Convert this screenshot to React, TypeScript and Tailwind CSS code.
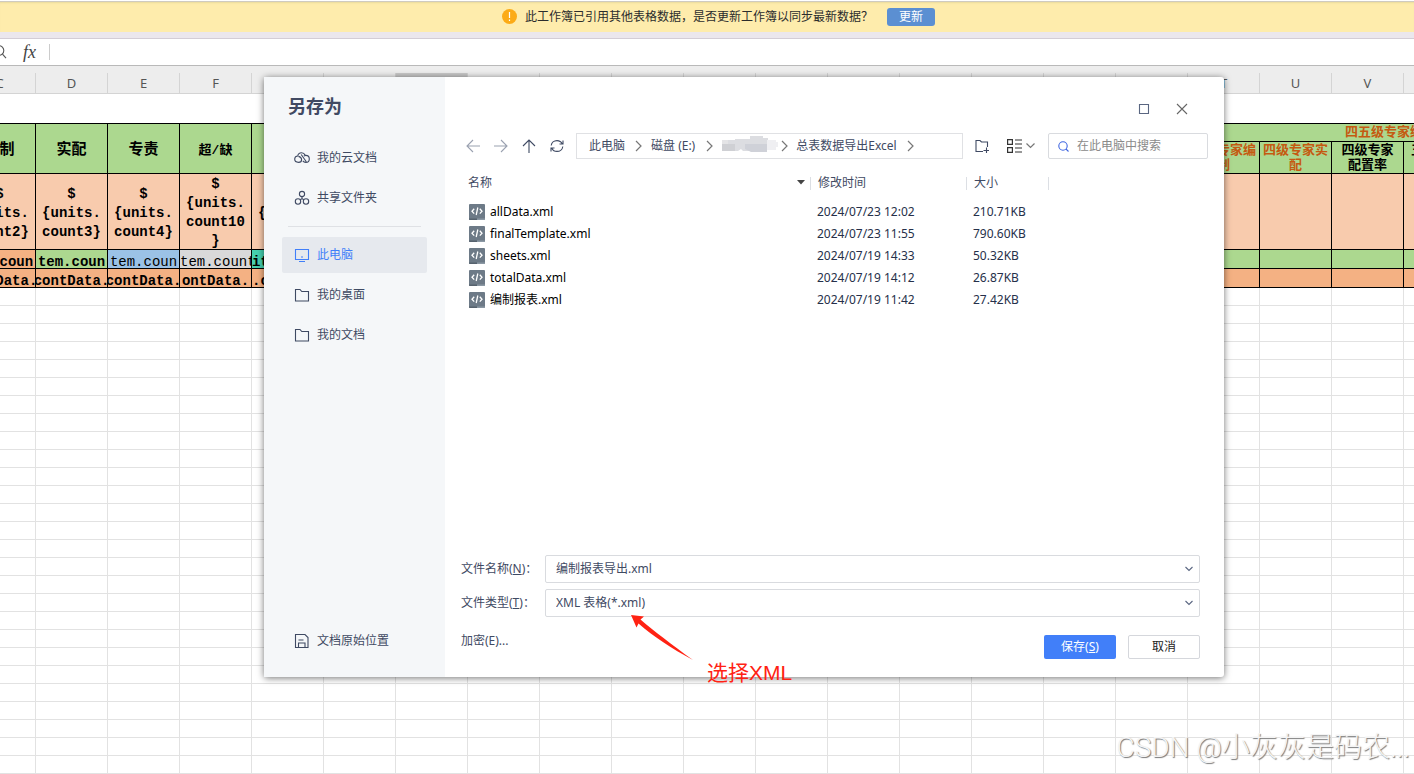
import type { ReactNode } from "react";

const HEADERS = ["C", "D", "E", "F", "", "", "", "", "", "", "", "", "", "", "", "", "", "T", "U", "V", ""];
const BLANK_ROWS = Array.from({ length: 27 }, (_, i) => i);
const SELECTED_COLUMN = 6;

const UNIT_LINES: Record<number, string[]> = {
  0: ["$", "{units.", "count2}"],
  1: ["$", "{units.", "count3}"],
  2: ["$", "{units.", "count4}"],
  3: ["$", "{units.", "count10", "}"],
};

const ITEM_CELLS: Record<number, { text: string; style: string }> = {
  0: { text: "tem.coun", style: "bg-[#f4b183] font-bold justify-center" },
  1: { text: "tem.coun", style: "bg-[#acd88f] font-bold justify-center" },
  2: { text: "tem.coun", style: "bg-[#9bc2e6] justify-center" },
  3: { text: "tem.count", style: "bg-[#d9d9d9] justify-start" },
  4: { text: "it", style: "bg-[#46d0b0] font-bold justify-start" },
};

const TOTAL_CELLS: Record<number, string> = {
  0: "contData.",
  1: "contData.",
  2: "contData.",
  3: "ontData.",
};

const FILES = [
  { name: "allData.xml", date: "2024/07/23 12:02", size: "210.71KB" },
  { name: "finalTemplate.xml", date: "2024/07/23 11:55", size: "790.60KB" },
  { name: "sheets.xml", date: "2024/07/19 14:33", size: "50.32KB" },
  { name: "totalData.xml", date: "2024/07/19 14:12", size: "26.87KB" },
  { name: "编制报表.xml", date: "2024/07/19 11:42", size: "27.42KB" },
];

function Icon({ children, className = "", size = 16 }: { children: ReactNode; className?: string; size?: number }) {
  return (
    <svg
      width={size}
      height={size}
      viewBox={`0 0 ${size} ${size}`}
      fill="none"
      stroke="currentColor"
      strokeWidth="1.1"
      className={`shrink-0 ${className}`}
      aria-hidden="true"
    >
      {children}
    </svg>
  );
}

const Chevron = () => (
  <svg width="7" height="12" viewBox="0 0 7 12" fill="none" stroke="#777" strokeWidth="1.2" className="shrink-0" aria-hidden="true">
    <path d="M1 1l5 5-5 5" />
  </svg>
);

const CloudIcon = () => (
  <Icon>
    <path d="M4.6 12.4C2.4 12.4.7 11 .7 9.1.7 7.4 2 6.1 3.7 6c.4-2 1.900-3.200 3.800-3.200 1.700 0 3 .9 3.600 2.400M4.600 12.400c1.900 0 3-1.100 3-2.700 0-1.800-1.500-2.900-3.100-3.300M7.200 4.500l5.100 7.300M8.800 10.900c.8 1.100 1.700 1.500 3 1.500 2 0 3.500-1.500 3.500-3.500s-1.500-3.500-3.500-3.500c-.8 0-1.400.2-2 .6" />
  </Icon>
);

const ShareIcon = () => (
  <Icon>
    <circle cx="8" cy="4" r="2.600" />
    <circle cx="4" cy="11.500" r="2.700" />
    <circle cx="12" cy="11.500" r="2.700" />
    <path d="M8 6.600v2L6.100 9.800M8 8.600l1.900 1.200" />
  </Icon>
);

const MonitorIcon = () => (
  <Icon>
    <path d="M1.500 2.500h13v10h-13zM5 14.500h6M7 10h2" />
  </Icon>
);

const FolderIcon = () => (
  <Icon>
    <path d="M1.500 2.500h4.500l1.800 2h6.700v9.500h-13z" />
  </Icon>
);

const SaveIcon = () => (
  <Icon>
    <path d="M1.500 1.500h9.500l3 3v10H1.500zM4.500 14.500V10h6.500v4.500M4.500 7h5" />
  </Icon>
);

const XmlIcon = () => (
  <svg width="16" height="16" viewBox="0 0 16 16" fill="none" className="shrink-0" aria-hidden="true">
    <rect width="16" height="16" rx="1" fill="#6d7a87" />
    <path d="M0 14.500h8V16H1a1 1 0 0 1-1-1z" fill="#56626e" />
    <path d="M8 14.500h8V15a1 1 0 0 1-1 1H8z" fill="#8b98a4" />
    <path d="M5.200 4.800L3 7.200l2.200 2.400M10.800 4.800L13 7.200l-2.200 2.400M8.800 3.500L7.200 11" stroke="#fff" strokeWidth="1.300" />
  </svg>
);

function NavItem({ icon, label, active = false }: { icon: ReactNode; label: string; active?: boolean }) {
  return (
    <button
      type="button"
      className={`flex h-9 w-full items-center gap-[7px] rounded-[2px] pl-3 text-left ${
        active ? "bg-[#e6e9ee] text-[#417ff9]" : "text-[#3f4a63]"
      }`}
    >
      {icon}
      <span>{label}</span>
    </button>
  );
}

function Banner() {
  return (
    <div className="flex h-8 shrink-0 items-center justify-center border-t border-t-[#fff] bg-[#feecac] pl-[23px] shadow-[inset_0_1px_0_#cfcbc0,inset_0_3px_2px_-1px_#eadb9e]">
      <svg width="15" height="15" viewBox="0 0 15 15" aria-hidden="true">
        <circle cx="7.5" cy="7.5" r="7.500" fill="#fcab16" />
        <path d="M7.500 3v6M7.500 10.500v1.500" stroke="#fff" strokeWidth="1.200" />
      </svg>
      <span className="ml-2 text-[#2c2c2c]">此工作簿已引用其他表格数据，是否更新工作簿以同步最新数据？</span>
      <button type="button" className="ml-[14px] h-[18px] w-12 rounded-[3px] bg-[#5b8fd2] leading-[18px] text-white">
        更新
      </button>
    </div>
  );
}

function FormulaBar() {
  return (
    <div className="mt-[6px] flex h-7 shrink-0 items-center border-t border-b border-t-[#d3cdd6] border-b-[#b9b9b9] bg-white">
      <Icon className="-ml-2 text-[#555]">
        <circle cx="7" cy="6.500" r="4.800" />
        <path d="M10.500 10.200l3.500 4" />
      </Icon>
      <span className="ml-[15px] w-6 text-[18px] leading-5 text-[#444] italic [font-family:'Liberation_Serif',serif]">
        fx
      </span>
      <span className="ml-[2px] h-4 w-px bg-[#ccc]" />
    </div>
  );
}

function Sheet() {
  const cell = "border-r border-b border-black p-0";
  return (
    <div className="min-h-0 flex-1 overflow-hidden bg-white">
      <div className="h-[7px] bg-[#ededed]" />
      <table className="-ml-9 w-[1512px] table-fixed border-separate border-spacing-0 [font-family:'Liberation_Mono','Noto_Sans_CJK_SC',monospace]">
        <thead>
          <tr>
            {HEADERS.map((h, i) => (
              <th
                key={i}
                className={`h-[21px] w-[72px] border-r border-b border-[#d4d4d4] p-0 text-[13px] leading-5 font-normal text-[#555] [font-family:'Noto_Sans',sans-serif] ${
                  i === SELECTED_COLUMN ? "bg-[#c9c9c9]" : "bg-[#ededed]"
                }`}
              >
                {h}
              </th>
            ))}
          </tr>
        </thead>
        <tbody>
          <tr>
            <td colSpan={21} className="h-[30px] border-b border-black p-0" />
          </tr>
          <tr className="bg-[#acd88f]">
            <td rowSpan={2} className={`${cell} pt-1 text-center text-[15px] font-bold`}>编制</td>
            <td rowSpan={2} className={`${cell} pt-1 text-center text-[15px] font-bold`}>实配</td>
            <td rowSpan={2} className={`${cell} pt-1 text-center text-[15px] font-bold`}>专责</td>
            <td rowSpan={2} className={`${cell} pt-1 text-center text-[13px] font-bold`}>超/缺</td>
            {HEADERS.slice(4, 17).map((_, i) => (
              <td key={i} rowSpan={2} className={cell} />
            ))}
            <td colSpan={4} className={`${cell} h-[18px] pl-[157px] text-[13px] leading-[17px] font-bold whitespace-nowrap text-[#c55a11]`}>
              四五级专家编
            </td>
          </tr>
          <tr className="bg-[#acd88f] text-center text-[13px] leading-[15px] font-bold">
            <td className={`${cell} h-8 text-[#c55a11]`}>四级专家编<br />制</td>
            <td className={`${cell} text-[#c55a11]`}>四级专家实<br />配</td>
            <td className={cell}>四级专家<br />配置率</td>
            <td className={cell}>
              <div className="h-[30px] pl-[7px] text-left">五</div>
            </td>
          </tr>
          <tr className="bg-[#f8cbad]">
            {HEADERS.map((_, i) => (
              <td key={i} className={`${cell} h-[76px]`}>
                <div className="flex h-[75px] flex-col items-center justify-center overflow-hidden pt-[3px] text-[14px] leading-[19px] font-bold">
                  {(UNIT_LINES[i] ?? []).map((line) => (
                    <span key={line}>{line}</span>
                  ))}
                  {i === 4 && <span className="self-start pl-[6px]">{"{"}</span>}
                </div>
              </td>
            ))}
          </tr>
          <tr className="bg-[#acd88f]">
            {HEADERS.map((_, i) => (
              <td key={i} className={`${cell} h-[19px]`}>
                <div className={`flex h-[18px] overflow-hidden text-[14px] leading-6 ${ITEM_CELLS[i]?.style ?? ""}`}>
                  <span>{ITEM_CELLS[i]?.text}</span>
                </div>
              </td>
            ))}
          </tr>
          <tr className="bg-[#f4b183]">
            {HEADERS.map((_, i) => (
              <td key={i} className={`${cell} h-[19px]`}>
                <div className="flex h-[18px] justify-center overflow-hidden text-[14px] leading-6 font-bold">
                  <span>{TOTAL_CELLS[i]}</span>
                  {i === 4 && <span className="flex-1">.c</span>}
                </div>
              </td>
            ))}
          </tr>
          {BLANK_ROWS.map((r) => (
            <tr key={r}>
              {HEADERS.map((_, i) => (
                <td key={i} className="h-[18px] border-r border-b border-[#e2e2e2] p-0" />
              ))}
            </tr>
          ))}
        </tbody>
      </table>
    </div>
  );
}

function Sidebar() {
  return (
    <aside className="flex w-[181px] shrink-0 flex-col bg-[#f5f7f9] px-[18px] pb-[18px]">
      <h1 className="mt-4 pl-[6px] text-[18px] leading-[26px] font-bold text-[#414a63]">另存为</h1>
      <nav className="mt-[21px] flex flex-col gap-1">
        <NavItem icon={<CloudIcon />} label="我的云文档" />
        <NavItem icon={<ShareIcon />} label="共享文件夹" />
        <hr className="mx-[6px] my-[6px] border-[#dfe1e5]" />
        <NavItem icon={<MonitorIcon />} label="此电脑" active />
        <NavItem icon={<FolderIcon />} label="我的桌面" />
        <NavItem icon={<FolderIcon />} label="我的文档" />
      </nav>
      <div className="mt-auto">
        <NavItem icon={<SaveIcon />} label="文档原始位置" />
      </div>
    </aside>
  );
}

function Toolbar() {
  return (
    <div className="flex h-[26px] items-center pl-[5px]">
      <div className="flex gap-[14px] text-[#3f4a63]">
        <button type="button" aria-label="后退" className="text-[#9aa1b0]">
          <Icon size={14}><path d="M14 7H1M7 1L1 7l6 6" /></Icon>
        </button>
        <button type="button" aria-label="前进" className="text-[#9aa1b0]">
          <Icon size={14}><path d="M0 7h13M7 1l6 6-6 6" /></Icon>
        </button>
        <button type="button" aria-label="向上">
          <Icon size={14}><path d="M7 14V1M1 7l6-6 6 6" /></Icon>
        </button>
        <button type="button" aria-label="刷新">
          <Icon size={14}>
            <path d="M1.200 6.500C1.500 3.700 4 1.600 7 1.600c2.300 0 4.300 1.300 5.200 3.200M13 1.500v3.500H9.500M12.800 7.500c-.3 2.800-2.800 4.900-5.800 4.900-2.300 0-4.300-1.300-5.200-3.200M1 12.500V9h3.500" />
          </Icon>
        </button>
      </div>
      <div className="ml-3 flex h-[26px] flex-1 items-center border border-[#e0e1e4] pl-3 whitespace-nowrap text-[#3f4a63]">
        <span>此电脑</span>
        <span className="ml-[10px] flex"><Chevron /></span>
        <span className="ml-[9px]">磁盘 (E:)</span>
        <span className="ml-[11px] flex"><Chevron /></span>
        <svg width="56" height="20" viewBox="0 0 56 20" className="ml-[9px] shrink-0" aria-hidden="true">
          <path d="M0 4h13V3h15V0h13v2h5v2h7v9H45v3H29v-1h-8l-2-2-3 2h-4v-1H0z" fill="#dcdde1" />
          <path d="M0 4h6v5H0z" fill="#e4e4e6" />
          <path d="M0 8h13v7H0z" fill="#cfd0d4" />
          <path d="M28 8h17v8H29l-6-3V8z" fill="#cfd1d8" />
          <path d="M45 4h9v2h2v5h-2v3h-9z" fill="#efeff2" />
        </svg>
        <span className="ml-[3px] flex"><Chevron /></span>
        <span className="ml-2">总表数据导出Excel</span>
        <span className="ml-[10px] flex"><Chevron /></span>
      </div>
      <button type="button" aria-label="新建文件夹" className="ml-3 text-[#3f4a63]">
        <Icon size={14}><path d="M8 12.500H1V1.500h4l1.500 1.500h6v5M11.500 8.500v5.500M8.500 11.500H14" /></Icon>
      </button>
      <button type="button" aria-label="视图" className="ml-[18px] flex items-center gap-1 text-[#333]">
        <svg width="15" height="14" viewBox="0 0 15 14" fill="none" stroke="currentColor" strokeWidth="1.200" aria-hidden="true">
          <path d="M.6.600h4.800v4.800H.6zM.6 8.600h4.800v4.800H.6zM8 1h7M8 5h7M8 9h7M8 13h7" />
        </svg>
        <svg width="9" height="6" viewBox="0 0 9 6" fill="none" stroke="#777" strokeWidth="1.200" aria-hidden="true">
          <path d="M.5.500l4 4 4-4" />
        </svg>
      </button>
      <label className="ml-[13px] flex h-[26px] w-40 items-center rounded-[2px] border border-[#d9dbdf] pl-[9px]">
        <Icon size={11} className="text-[#3f66e0]">
          <circle cx="5" cy="5" r="4.200" />
          <path d="M8 8l2.500 2.500" />
        </Icon>
        <input
          type="text"
          aria-label="搜索"
          placeholder="在此电脑中搜索"
          className="ml-2 w-full min-w-0 bg-transparent outline-none placeholder:text-[#8a8a8a]"
        />
      </label>
    </div>
  );
}

function FileList() {
  const sep = "h-[13px] w-px bg-[#dcdfe4]";
  return (
    <table className="mt-3 w-[588px] table-fixed border-collapse text-left">
      <thead>
        <tr className="h-6 text-[#3f4a63]">
          <th className="w-[350px] p-0 pl-[7px] font-normal">
            <div className="flex items-center justify-between">
              <span>名称</span>
              <span className="flex items-center gap-[5px]">
                <svg width="8" height="7" viewBox="0 0 8 7" aria-hidden="true"><path d="M0 0h8L4 4.500z" fill="#444" /></svg>
                <span className={sep} />
              </span>
            </div>
          </th>
          <th className="w-[156px] p-0 pl-[7px] font-normal">
            <div className="flex items-center justify-between">
              <span>修改时间</span>
              <span className={sep} />
            </div>
          </th>
          <th className="p-0 pl-[7px] font-normal">
            <div className="flex items-center justify-between">
              <span>大小</span>
              <span className={sep} />
            </div>
          </th>
        </tr>
      </thead>
      <tbody>
        <tr className="h-[6px]" />
        {FILES.map((f) => (
          <tr key={f.name} className="h-[22px] text-[#26304a]">
            <td className="p-0 pl-2 text-black">
              <div className="flex items-center gap-[5px]">
                <XmlIcon />
                <span>{f.name}</span>
              </div>
            </td>
            <td className="p-0 pl-[6px]">{f.date}</td>
            <td className="p-0 pl-[6px]">{f.size}</td>
          </tr>
        ))}
      </tbody>
    </table>
  );
}

const FieldArrow = () => (
  <svg width="8" height="6" viewBox="0 0 8 6" fill="none" stroke="#5a6681" strokeWidth="1.100" className="pointer-events-none shrink-0" aria-hidden="true">
    <path d="M.5 1L4 4.500 7.500 1" />
  </svg>
);

function SaveAsDialog() {
  return (
    <section
      role="dialog"
      aria-label="另存为"
      className="absolute top-[77px] left-[264px] flex h-[600px] w-[960px] rounded-[3px] bg-white text-xs shadow-[0_1px_7px_rgba(0,0,0,0.550)]"
    >
      <Sidebar />
      <div className="flex min-w-0 flex-1 flex-col px-4 pb-[18px]">
        <div className="mt-6 flex h-4 items-center justify-end gap-[26px] pr-5">
          <button type="button" aria-label="最大化" className="text-[#5a6681]">
            <Icon size={12}><path d="M1.500 1.500h9v9h-9z" /></Icon>
          </button>
          <button type="button" aria-label="关闭" className="text-[#666]">
            <Icon size={12}><path d="M1 1l10 10M11 1L1 11" /></Icon>
          </button>
        </div>
        <div className="mt-4">
          <Toolbar />
        </div>
        <FileList />
        <form className="mt-auto pr-2 text-[#3f4a63]" onSubmit={(e) => e.preventDefault()}>
          <div className="flex items-center">
            <label htmlFor="file-name" className="w-21 shrink-0">
              文件名称(<u>N</u>)：
            </label>
            <div className="flex h-7 flex-1 items-center rounded-[2px] border border-[#d9dbdf] pr-[6px] pl-[10px]">
              <input id="file-name" type="text" defaultValue="编制报表导出.xml" className="w-full min-w-0 flex-1 bg-transparent outline-none" />
              <FieldArrow />
            </div>
          </div>
          <div className="mt-[6px] flex items-center">
            <label htmlFor="file-type" className="w-21 shrink-0">
              文件类型(<u>T</u>)：
            </label>
            <div className="flex h-7 flex-1 items-center rounded-[2px] border border-[#d9dbdf] pr-[6px] pl-[10px]">
              <select id="file-type" className="w-full flex-1 appearance-none bg-transparent outline-none">
                <option>XML 表格(*.xml)</option>
              </select>
              <FieldArrow />
            </div>
          </div>
          <div className="mt-[18px] flex items-start justify-between">
            <button type="button" className="leading-3">加密(E)...</button>
            <div className="flex gap-3">
              <button type="submit" className="h-6 w-[72px] rounded-[2px] bg-[#417ff9] text-white">
                保存(<u>S</u>)
              </button>
              <button type="button" className="h-6 w-[72px] rounded-[2px] border border-[#d5d7dc] text-[#222]">
                取消
              </button>
            </div>
          </div>
        </form>
      </div>
    </section>
  );
}

function Annotation() {
  return (
    <div className="pointer-events-none absolute top-[614px] left-[630px] text-[21px] leading-6 text-[#ff2213]">
      <svg width="64" height="47" viewBox="0 0 64 47" aria-hidden="true">
        <path d="M1 1l13 1.500-3.500 3C24 17 41 30 63 46 41 34 24 23 8.500 9.500L6.500 13.500z" fill="currentColor" />
      </svg>
      <p className="pl-[77px] [font-family:'Liberation_Sans','Noto_Sans_CJK_SC',sans-serif]">选择XML</p>
    </div>
  );
}

export default function App() {
  return (
    <main className="relative flex h-screen flex-col overflow-hidden bg-[#ebe7ed] text-xs [font-family:'Noto_Sans','Noto_Sans_CJK_SC',sans-serif]">
      <Banner />
      <FormulaBar />
      <Sheet />
      <SaveAsDialog />
      <Annotation />
      <p className="absolute right-1 bottom-2 text-[28px] leading-9 font-light text-[#f4f4f4] [font-family:Roboto,'Noto_Sans_CJK_SC',sans-serif] [text-shadow:1px_1px_1px_#777]">
        CSDN @小灰灰是码农...
      </p>
    </main>
  );
}
